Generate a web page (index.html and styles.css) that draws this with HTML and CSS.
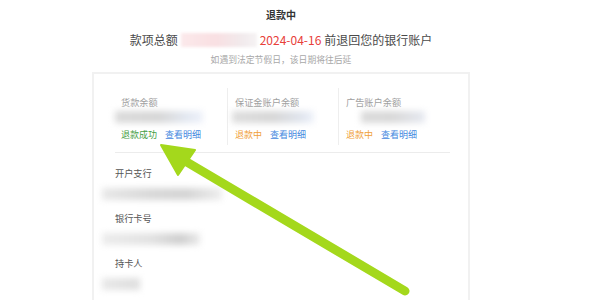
FILE: index.html
```html
<!DOCTYPE html>
<html lang="zh">
<head>
<meta charset="utf-8">
<link rel="stylesheet" href="styles.css">
</head>
<body>
<div class="page">
  <div class="header">
    <div class="title">退款中</div>
    <div class="summary-line">
      <span>款项总额</span>
      <span class="blur-pink"></span>
      <span class="date">2024-04-16</span>
      <span>前退回您的银行账户</span>
    </div>
    <div class="note">如遇到法定节假日，该日期将往后延</div>
  </div>
  <div class="card">
    <div class="balances">
      <div class="col">
        <div class="label">货款余额</div>
        <div class="blur-val v1"></div>
        <div class="status"><span class="ok">退款成功</span><span class="link">查看明细</span></div>
      </div>
      <div class="col sep">
        <div class="label">保证金账户余额</div>
        <div class="blur-val v2"></div>
        <div class="status"><span class="pending">退款中</span><span class="link">查看明细</span></div>
      </div>
      <div class="col sep">
        <div class="label">广告账户余额</div>
        <div class="blur-val v3"></div>
        <div class="status"><span class="pending">退款中</span><span class="link">查看明细</span></div>
      </div>
    </div>
    <div class="details">
      <div class="dlabel">开户支行</div>
      <div class="dval w1"></div>
      <div class="dlabel">银行卡号</div>
      <div class="dval w2"></div>
      <div class="dlabel">持卡人</div>
      <div class="dval w3"></div>
    </div>
  </div>
</div>
<svg class="arrow" width="600" height="300" viewBox="0 0 600 300">
  <line x1="405" y1="291" x2="180" y2="158" stroke="#a4d81c" stroke-width="9" stroke-linecap="round"/>
  <polygon points="161,145 195,150 178,175" fill="#a4d81c" stroke="#a4d81c" stroke-width="2" stroke-linejoin="round"/>
</svg>
</body>
</html>
```
FILE: styles.css
```css
html, body {
  margin: 0;
  padding: 0;
  background: #ffffff;
  width: 600px;
  height: 300px;
  overflow: hidden;
}
body {
  font-family: "Noto Sans CJK SC", "Noto Sans", sans-serif;
  color: #333;
  position: relative;
}
.page {
  margin-left: 92px;
  width: 378px;
}
.header {
  padding-top: 8px;
  text-align: center;
}
.title {
  font-size: 10px;
  line-height: 14px;
  font-weight: bold;
  color: #333;
}
.summary-line {
  margin-top: 10px;
  height: 16px;
  display: flex;
  justify-content: center;
  align-items: center;
  gap: 3px;
  font-size: 12px;
  line-height: 16px;
  color: #4a4a4a;
}
.blur-pink {
  display: inline-block;
  width: 76px;
  height: 14px;
  background: linear-gradient(to right, #fbe9eb, #f9dfe2 45%, #f1eaec 80%, #f6f3f4);
  filter: blur(1.5px);
}
.date {
  color: #e8403a;
}
.note {
  margin-top: 6px;
  font-size: 8.8px;
  line-height: 12px;
  color: #a8a8a8;
}
.card {
  margin-top: 6px;
  border: 2px solid #f1f1f1;
  border-bottom: none;
  height: 240px;
  padding: 14px 18px 0 21px;
  box-sizing: border-box;
}
.balances {
  display: grid;
  grid-template-columns: 112px 111px 112px;
  border-bottom: 1px solid #ececec;
  padding-bottom: 7px;
}
.col {
  padding: 8px 0 4px 6px;
}
.col.sep {
  border-left: 1px solid #eeeeee;
  padding-left: 7px;
}
.label {
  font-size: 9.2px;
  line-height: 12px;
  color: #a0a0a0;
}
.blur-val {
  margin-top: 3px;
  height: 12px;
  filter: blur(3px);
}
.v1 {
  margin-left: -6px;
  width: 88px;
  background: linear-gradient(to right, #dadada, #d6d6d6 50%, #e2e7f0 80%, #edf1fa);
}
.v2 {
  margin-left: -3px;
  width: 82px;
  background: linear-gradient(to right, #dddddd, #d6d6d6 50%, #e0e5ee 85%, #eef2fa);
}
.v3 {
  margin-left: 15px;
  width: 64px;
  background: linear-gradient(to right, #dadada, #d8d8d8 50%, #e6e9f1);
}
.status {
  margin-top: 6px;
  font-size: 9px;
  line-height: 12px;
  display: flex;
  gap: 8px;
}
.ok { color: #46a043; }
.pending { color: #f0a03a; }
.link { color: #4589e0; }
.details {
  padding-top: 14px;
}
.dlabel {
  font-size: 9.2px;
  line-height: 12px;
  color: #555;
  margin-bottom: 9px;
}
.dval {
  margin-left: -13px;
  height: 12px;
  margin-bottom: 12px;
  filter: blur(3px);
}
.w1 {
  width: 120px;
  background: linear-gradient(to right, #e8e8e8, #d8d8d8 40%, #d4d4d4 70%, #eeeeee);
}
.w2 {
  width: 98px;
  background: linear-gradient(to right, #ececec, #e2e2e2 50%, #cfcfcf 80%, #eaeaea);
}
.w3 {
  width: 38px;
  background: linear-gradient(to right, #e8e8e8, #dedede);
}
.arrow {
  position: absolute;
  left: 0;
  top: 0;
  pointer-events: none;
}
```
